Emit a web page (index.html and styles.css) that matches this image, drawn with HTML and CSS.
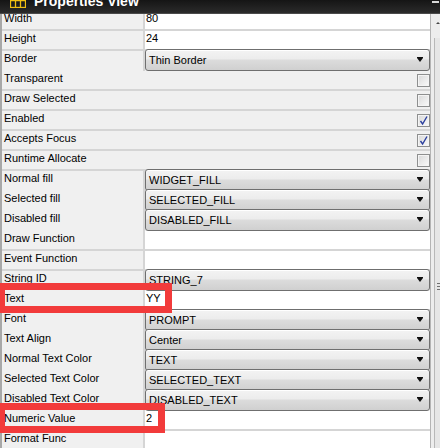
FILE: index.html
```html
<!DOCTYPE html>
<html lang="en">
<head>
    <meta charset="UTF-8">
    <title>Properties View</title>
    <link rel="stylesheet" href="styles.css">
</head>
<body>
<div class="header"> <!-- Тёмная шапка панели -->
    <svg class="header-icon" width="16" height="15" viewBox="0 0 16 15">
        <rect x="0.5" y="0.5" width="15" height="14" fill="none" stroke="#f0bf12" stroke-width="1.3"/>
        <path d="M0.5 7.5H15.5M5.5 0.5V14.5M10.5 0.5V14.5" stroke="#f0bf12" stroke-width="1.3"/>
    </svg>
    <span class="header-title">Properties View</span>
    <span class="header-min"></span>
</div>
<div class="panel">
    <div class="rows"> <!-- Список свойств -->
        <div class="prop"><div class="name">Width</div><div class="val">80</div></div>
        <div class="prop"><div class="name">Height</div><div class="val">24</div></div>
        <div class="prop"><div class="name">Border</div><div class="val drop"><div class="select">Thin Border<span class="arrow"></span></div></div></div>
        <div class="prop check"><div class="name">Transparent</div><div class="val"><span class="box"></span></div></div>
        <div class="prop check"><div class="name">Draw Selected</div><div class="val"><span class="box"></span></div></div>
        <div class="prop check"><div class="name">Enabled</div><div class="val"><span class="box checked"><svg width="11" height="11" viewBox="0 0 11 11"><path d="M2.5 6L4.6 9L9 1.5" fill="none" stroke="#2b3f9e" stroke-width="1.4"/></svg></span></div></div>
        <div class="prop check"><div class="name">Accepts Focus</div><div class="val"><span class="box checked"><svg width="11" height="11" viewBox="0 0 11 11"><path d="M2.5 6L4.6 9L9 1.5" fill="none" stroke="#2b3f9e" stroke-width="1.4"/></svg></span></div></div>
        <div class="prop check"><div class="name">Runtime Allocate</div><div class="val"><span class="box"></span></div></div>
        <div class="prop"><div class="name">Normal fill</div><div class="val drop"><div class="select">WIDGET_FILL<span class="arrow"></span></div></div></div>
        <div class="prop"><div class="name">Selected fill</div><div class="val drop"><div class="select">SELECTED_FILL<span class="arrow"></span></div></div></div>
        <div class="prop"><div class="name">Disabled fill</div><div class="val drop"><div class="select">DISABLED_FILL<span class="arrow"></span></div></div></div>
        <div class="prop"><div class="name">Draw Function</div><div class="val"></div></div>
        <div class="prop"><div class="name">Event Function</div><div class="val"></div></div>
        <div class="prop"><div class="name">String ID</div><div class="val drop"><div class="select">STRING_7<span class="arrow"></span></div></div></div>
        <div class="prop"><div class="name">Text</div><div class="val">YY</div></div>
        <div class="prop"><div class="name">Font</div><div class="val drop"><div class="select">PROMPT<span class="arrow"></span></div></div></div>
        <div class="prop"><div class="name">Text Align</div><div class="val drop"><div class="select">Center<span class="arrow"></span></div></div></div>
        <div class="prop"><div class="name">Normal Text Color</div><div class="val drop"><div class="select">TEXT<span class="arrow"></span></div></div></div>
        <div class="prop"><div class="name">Selected Text Color</div><div class="val drop"><div class="select">SELECTED_TEXT<span class="arrow"></span></div></div></div>
        <div class="prop"><div class="name">Disabled Text Color</div><div class="val drop"><div class="select">DISABLED_TEXT<span class="arrow"></span></div></div></div>
        <div class="prop"><div class="name">Numeric Value</div><div class="val">2</div></div>
        <div class="prop"><div class="name">Format Func</div><div class="val"></div></div>
    </div>
    <div class="scrollbar"> <!-- Обрезанная полоса прокрутки -->
        <span class="scroll-up"></span>
        <div class="thumb"><span class="grip"></span></div>
    </div>
</div>
<div class="mark mark-text"></div> <!-- Красная рамка вокруг строки Text -->
<div class="mark mark-num"></div> <!-- Красная рамка вокруг строки Numeric Value -->
</body>
</html>
```

FILE: styles.css
```css
:root {
    --row-bg: #f0f0f0; /* фон ячеек */
    --sep: #d5d5d5; /* разделители строк */
    --mark: #f23b3b; /* красные рамки */
}
body {
    margin: 0;
    width: 440px;
    height: 448px;
    overflow: hidden;
    position: relative;
    background: var(--row-bg);
    font-family: "Liberation Sans", Arial, sans-serif;
    font-size: 11px;
    color: #000;
}
.header { /* шапка, верх обрезан */
    position: relative;
    z-index: 2;
    height: 14px;
    display: flex;
    align-items: flex-end;
    overflow: hidden;
    background: linear-gradient(#151515, #2b2b2b);
    border-bottom: 1px solid #4a4a4a;
    box-sizing: border-box;
}
.header-icon {
    margin: 0 8px 5px 10px;
    flex: none;
}
.header-title {
    color: #fff;
    font-weight: bold;
    font-size: 14px;
    line-height: 16px;
    margin-bottom: 4px;
}
.header-min {
    align-self: flex-start;
    margin: 1px 1px 0 auto;
    width: 7px;
    height: 2px;
    background: #d8d8d8;
}
.panel {
    display: flex;
    margin-top: -3px;
}
.rows {
    width: 430px;
    border-left: 2px solid #a8a8a8;
    box-sizing: border-box;
}
.prop { /* одна строка свойства */
    display: grid;
    grid-template-columns: 141px 285px;
    column-gap: 2px;
    height: 20px;
    padding-bottom: 2px;
    box-sizing: border-box;
    background: var(--sep);
}
.prop.check {
    grid-template-columns: 143px 285px;
    column-gap: 0;
}
.name {
    background: var(--row-bg);
    padding: 1px 0 0 2px;
    line-height: 13px;
    white-space: nowrap;
}
.val {
    background: #fff;
    padding: 1px 0 0 1px;
    line-height: 13px;
}
.check .val {
    background: var(--row-bg);
    display: flex;
    justify-content: flex-end;
    padding: 0;
}
.val.drop {
    padding: 0;
    background: var(--row-bg);
}
.select { /* выпадающий список */
    margin-top: -2px;
    height: 22px;
    box-sizing: border-box;
    display: flex;
    align-items: center;
    padding: 0 6px 0 3px;
    border: 1px solid #6f6f6f;
    border-radius: 3px;
    background: linear-gradient(#f3f3f3 0%, #ececec 45%, #dcdcdc 50%, #d0d0d0 100%);
    box-shadow: inset 0 1px 0 #fff;
}
.arrow {
    margin-left: auto;
    width: 0;
    height: 0;
    border-left: 3.5px solid transparent;
    border-right: 3.5px solid transparent;
    border-top: 4px solid #111;
    box-shadow: 0 -1px 0 #111;
}
.box { /* чекбокс */
    margin-top: 3px;
    width: 13px;
    height: 13px;
    box-sizing: border-box;
    border: 1px solid #8e8f8f;
    background: linear-gradient(135deg, #d8d8d8, #fbfbfb);
    box-shadow: inset 0 0 0 1px #f4f4f4;
    display: flex;
    align-items: center;
    justify-content: center;
}
.scrollbar {
    width: 10px;
    border-left: 1px solid #b4b4b4;
    box-sizing: border-box;
    background: #ededed;
    display: flex;
    flex-direction: column;
}
.scroll-up {
    margin: 11px 0 0 5px;
    width: 0;
    height: 0;
    border-left: 2px solid transparent;
    border-right: 2px solid transparent;
    border-bottom: 2px solid #444;
}
.thumb {
    margin: 14px 0 0 3px;
    flex: 1;
    border-left: 1px solid #b8b8b8;
    background: #e6e6e6;
}
.grip {
    display: block;
    margin: 245px 0 0 2px;
    height: 7px;
    background: repeating-linear-gradient(#707070 0 1px, transparent 1px 3px);
}
.mark {
    position: absolute;
    left: -2px;
    height: 30px;
    border: 7px solid var(--mark);
    box-sizing: border-box;
}
.mark-text {
    top: 283px;
    width: 174px;
}
.mark-num {
    top: 403px;
    width: 167px;
}
```
